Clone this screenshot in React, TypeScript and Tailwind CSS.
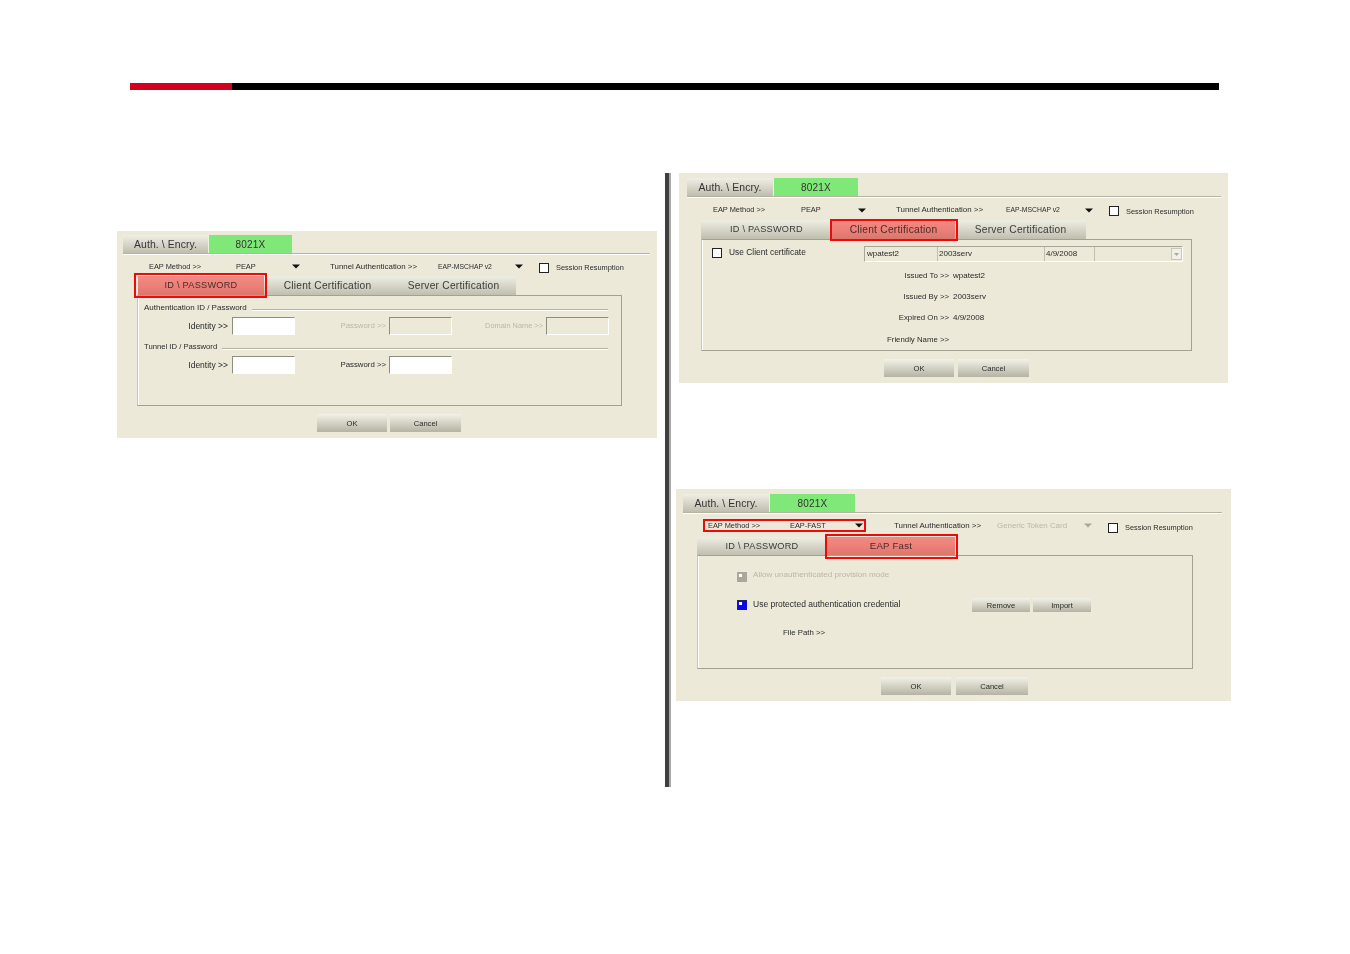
import React from 'react';

const Arrow = ({ disabled }: { disabled?: boolean }) => (
  <svg width="8" height="5" viewBox="0 0 8 5" className="block shrink-0">
    <path d="M0 0.5H8L4 4.5Z" fill={disabled ? '#a9a79a' : '#111111'} />
  </svg>
);

const Check = () => <div className="w-[10px] h-[10px] shrink-0 bg-white border border-[#222222]" />;

const Small = ({ className = '', children }: { className?: string; children: React.ReactNode }) => (
  <span className={`shrink-0 block whitespace-nowrap leading-[10px] ${className.includes('text-[') ? '' : 'text-[7.4px]'} ${className.includes('text-[#') ? '' : 'text-[#2a2a2a]'} ${className}`}>{children}</span>
);

const Input = ({ disabled }: { disabled?: boolean }) => (
  <div
    className={`w-[63px] h-[18px] shrink-0 border-t border-l border-t-[#8f8d7e] border-l-[#8f8d7e] border-r border-b border-r-white border-b-white ${
      disabled ? 'bg-[#ece9d8]' : 'bg-white'
    }`}
  />
);

const Tabs = ({ w1, w2 }: { w1: string; w2: string }) => (
  <div className="flex h-[18px]">
    <div className={`${w1} flex items-center justify-center pt-[2px] bg-gradient-to-b from-[#f0efe5] to-[#bfbdae] text-[10.4px] tracking-[0.1px] text-[#333333] whitespace-nowrap`}>
      Auth. \ Encry.
    </div>
    <div className={`${w2} flex items-center justify-center pt-[1px] bg-[#80e878] border-l border-l-[#e8f5d8] text-[10px] tracking-[0.2px] text-[#333333]`}>
      8021X
    </div>
  </div>
);

const Rule = ({ className = '' }: { className?: string }) => (
  <div className={`h-[2px] border-t border-t-[#b5b3a4] border-b border-b-white ${className}`} />
);

const SubTab = ({ className = '', children }: { className?: string; children: React.ReactNode }) => (
  <div className={`h-full flex items-center justify-center pt-[1px] bg-gradient-to-b from-[#efeee3] to-[#c0beaf] tracking-[0.25px] text-[#3a3a3a] whitespace-nowrap ${className.includes('text-[') ? '' : 'text-[10.2px]'} ${className}`}>
    {children}
  </div>
);

const RedTab = ({ className = '', children }: { className?: string; children: React.ReactNode }) => (
  <div className={`h-full flex items-center justify-center pt-[1px] bg-gradient-to-b from-[#ef8b83] via-[#ee8078] to-[#d9776e] tracking-[0.25px] text-[#4a2a28] whitespace-nowrap ${className.includes('text-[') ? '' : 'text-[10.2px]'} ${className}`}>
    {children}
  </div>
);

const Btn = ({ className = '', children }: { className?: string; children: React.ReactNode }) => (
  <div className={`h-[18px] shrink-0 flex items-center justify-center pt-[1px] bg-gradient-to-b from-[#f3f2e8] to-[#b5b3a3] text-[7.6px] text-[#2a2a2a] ${className}`}>
    {children}
  </div>
);

const Legend = ({ size, children }: { size: string; children: React.ReactNode }) => (
  <div className="flex items-center h-[14px] ml-[6px] mr-[13px] gap-[5px]">
    <Small className={size}>{children}</Small>
    <div className="flex-1 mt-[3px] h-[2px] border-t border-t-[#b5b3a4] border-b border-b-white" />
  </div>
);

const FirstPanel = () => (
  <div className="w-[540px] h-[207px] pt-[4px] bg-[#ece9d8] blur-[0.3px]">
    <div className="ml-[6px]"><Tabs w1="w-[85px]" w2="w-[84px]" /></div>
    <Rule className="ml-[6px] w-[527px]" />
    <div className="flex items-center h-[21px] pt-[2px] ml-[32px]">
      <Small className="w-[87px]">EAP Method &gt;&gt;</Small>
      <Small className="w-[56px]">PEAP</Small>
      <div className="w-[38px]"><Arrow /></div>
      <Small className="w-[108px] text-[7.9px]">Tunnel Authentication &gt;&gt;</Small>
      <Small className="w-[77px] text-[6.8px]">EAP-MSCHAP v2</Small>
      <div className="w-[24px]"><Arrow /></div>
      <div className="w-[17px] mt-[2px]"><Check /></div>
      <Small className="mt-[3px]">Session Resumption</Small>
    </div>
    <div className="flex h-[19px] ml-[21px]">
      <div className="relative w-[126px] h-full">
        <RedTab className="text-[9.2px]">ID \ PASSWORD</RedTab>
        <div className="absolute -left-[4px] -right-[3px] -top-[3px] -bottom-[3px] border-2 border-[#ee0a0a]" />
      </div>
      <SubTab className="w-[127px]">Client Certification</SubTab>
      <SubTab className="w-[125px]">Server Certification</SubTab>
    </div>
    <div className="ml-[20px] w-[485px] h-[111px] pt-[5px] border border-[#a3a193] border-l-[#c9c7b8] shadow-[inset_1px_0_0_#ffffff]">
      <Legend size="text-[8px]">Authentication ID / Password</Legend>
      <div className="flex items-center h-[18px] mt-[2px]">
        <Small className="w-[90px] text-right mr-[4px] text-[8.5px]">Identity &gt;&gt;</Small>
        <Input />
        <Small className="w-[91px] text-right mr-[3px] text-[7.8px] text-[#b9b7aa]">Password &gt;&gt;</Small>
        <Input disabled />
        <Small className="w-[91px] text-right mr-[3px] text-[7.4px] text-[#b9b7aa]">Domain Name &gt;&gt;</Small>
        <Input disabled />
      </div>
      <div className="mt-[5px]"><Legend size="text-[7.7px]">Tunnel ID / Password</Legend></div>
      <div className="flex items-center h-[18px] mt-[2px]">
        <Small className="w-[90px] text-right mr-[4px] text-[8.5px]">Identity &gt;&gt;</Small>
        <Input />
        <Small className="w-[91px] text-right mr-[3px] text-[7.8px]">Password &gt;&gt;</Small>
        <Input />
      </div>
    </div>
    <div className="flex mt-[8px] ml-[200px] gap-[3px]">
      <Btn className="w-[70px]">OK</Btn>
      <Btn className="w-[71px]">Cancel</Btn>
    </div>
  </div>
);

const InfoRow = ({ label, value }: { label: string; value?: string }) => (
  <div className="flex items-center h-[21.3px]">
    <Small className="w-[247px] text-right text-[7.8px]">{label}</Small>
    {value && <Small className="ml-[4px] text-[8px]">{value}</Small>}
  </div>
);

const SecondPanel = () => (
  <div className="ml-[3px] w-[549px] h-[210px] pt-[5px] bg-[#ece9d8] blur-[0.3px]">
    <div className="ml-[8px]"><Tabs w1="w-[86px]" w2="w-[85px]" /></div>
    <Rule className="ml-[8px] w-[534px]" />
    <div className="flex items-center h-[22px] pt-[2px] ml-[34px]">
      <Small className="w-[88px]">EAP Method &gt;&gt;</Small>
      <Small className="w-[57px]">PEAP</Small>
      <div className="w-[38px]"><Arrow /></div>
      <Small className="w-[110px] text-[7.9px]">Tunnel Authentication &gt;&gt;</Small>
      <Small className="w-[79px] text-[6.8px]">EAP-MSCHAP v2</Small>
      <div className="w-[24px]"><Arrow /></div>
      <div className="w-[17px] mt-[2px]"><Check /></div>
      <Small className="mt-[3px]">Session Resumption</Small>
    </div>
    <div className="flex h-[19px] ml-[22px]">
      <SubTab className="w-[131px] text-[9.2px]">ID \ PASSWORD</SubTab>
      <div className="relative w-[123px] h-full">
        <RedTab>Client Certification</RedTab>
        <div className="absolute -left-[2px] -right-[3px] -top-[1px] -bottom-[2px] border-2 border-[#ee0a0a]" />
      </div>
      <SubTab className="w-[131px]">Server Certification</SubTab>
    </div>
    <div className="ml-[22px] w-[491px] h-[112px] pt-[6px] border border-[#a3a193] border-l-[#c9c7b8] shadow-[inset_1px_0_0_#ffffff]">
      <div className="flex h-[17px] ml-[10px]">
        <div className="w-[17px] mt-[2px]"><Check /></div>
        <Small className="w-[135px] text-[8.4px] mt-[1px]">Use Client certificate</Small>
        <div className="w-[319px] h-[16px] flex items-center border-t border-l border-[#a8a698] border-r-white border-b-white border-r border-b">
          <Small className="w-[73px] pl-[2px] border-r border-r-[#c0beaf] leading-[14px] text-[8px]">wpatest2</Small>
          <Small className="w-[107px] pl-[1px] border-r border-r-[#c0beaf] leading-[14px] text-[8px]">2003serv</Small>
          <Small className="w-[50px] pl-[1px] border-r border-r-[#c0beaf] leading-[14px] text-[8px]">4/9/2008</Small>
          <div className="ml-[76px] w-[11px] h-[12px] flex items-center justify-center bg-[#f2f0e6] border border-[#c9c7b8]">
            <svg width="5" height="3" viewBox="0 0 5 3" className="block"><path d="M0 0H5L2.5 3Z" fill="#a9a79a" /></svg>
          </div>
        </div>
      </div>
      <div className="mt-[2px]">
        <InfoRow label="Issued To >>" value="wpatest2" />
        <InfoRow label="Issued By >>" value="2003serv" />
        <InfoRow label="Expired On >>" value="4/9/2008" />
        <InfoRow label="Friendly Name >>" />
      </div>
    </div>
    <div className="flex mt-[8px] ml-[205px] gap-[4px]">
      <Btn className="w-[70px]">OK</Btn>
      <Btn className="w-[71px]">Cancel</Btn>
    </div>
  </div>
);

const ThirdPanel = () => (
  <div className="mt-[106px] w-[555px] h-[212px] pt-[5px] bg-[#ece9d8] blur-[0.3px]">
    <div className="ml-[7px]"><Tabs w1="w-[86px]" w2="w-[86px]" /></div>
    <Rule className="ml-[7px] w-[539px]" />
    <div className="flex items-center h-[23px] ml-[27px]">
      <div className="flex items-center w-[163px] h-[13px] pl-[3px] border-2 border-[#ee0a0a]">
        <Small className="w-[82px]">EAP Method &gt;&gt;</Small>
        <Small className="w-[65px]">EAP-FAST</Small>
        <Arrow />
      </div>
      <Small className="ml-[28px] w-[103px] text-[7.9px]">Tunnel Authentication &gt;&gt;</Small>
      <Small className="w-[87px] text-[7.9px] text-[#b9b7aa]">Generic Token Card</Small>
      <div className="w-[24px]"><Arrow disabled /></div>
      <div className="w-[17px] mt-[4px]"><Check /></div>
      <Small className="mt-[4px]">Session Resumption</Small>
    </div>
    <div className="flex h-[18px] ml-[21px]">
      <SubTab className="w-[130px] text-[9.2px]">ID \ PASSWORD</SubTab>
      <div className="relative w-[128px] h-full">
        <RedTab className="text-[9.6px]">EAP Fast</RedTab>
        <div className="absolute -left-[2px] -right-[3px] -top-[3px] -bottom-[4px] border-2 border-[#ee0a0a]" />
      </div>
    </div>
    <div className="ml-[21px] w-[496px] h-[114px] pt-[14px] pl-[39px] border border-[#a3a193] border-l-[#c9c7b8] shadow-[inset_1px_0_0_#ffffff]">
      <div className="flex items-center h-[14px] gap-[6px]">
        <div className="w-[10px] h-[10px] bg-[#aaa89a] relative">
          <div className="absolute left-[2px] top-[2px] w-[3px] h-[3px] bg-white" />
        </div>
        <Small className="mb-[4px] text-[8.1px] text-[#b9b7aa]">Allow unauthenticated provision mode</Small>
      </div>
      <div className="flex items-center h-[14px] mt-[14px]">
        <div className="w-[10px] h-[10px] bg-[#0808e8] border-t border-l border-[#222266] relative">
          <div className="absolute left-[1px] top-[1px] w-[3px] h-[3px] bg-white" />
        </div>
        <Small className="ml-[6px] w-[219px] mb-[2px] text-[8.5px]">Use protected authentication credential</Small>
        <Btn className="w-[58px] !h-[14px]">Remove</Btn>
        <Btn className="ml-[3px] w-[58px] !h-[14px]">Import</Btn>
      </div>
      <div className="flex items-center h-[14px] pt-[2px] mt-[13px] ml-[46px]">
        <Small className="text-[7.8px]">File Path &gt;&gt;</Small>
      </div>
    </div>
    <div className="flex mt-[8px] ml-[205px] gap-[5px]">
      <Btn className="w-[70px]">OK</Btn>
      <Btn className="w-[72px]">Cancel</Btn>
    </div>
  </div>
);

export default function App() {
  return (
    <div className="w-[1350px] h-[954px] bg-white overflow-hidden pt-[83px] font-['Liberation_Sans',Arial,sans-serif]">
      {/* top bar */}
      <div className="flex h-[7px] ml-[130px] w-[1089px]">
        <div className="w-[102px] bg-[#d0021f]" />
        <div className="flex-1 bg-black" />
      </div>

      <div className="flex mt-[83px]">
        <div className="ml-[117px] mt-[58px]">
          <FirstPanel />
        </div>

        {/* divider */}
        <div className="ml-[8px] w-[6px] h-[614px] bg-[#3f3f3f] border-r-2 border-r-[#a8a8a8]" />

        <div className="ml-[5px]">
          <SecondPanel />
          <ThirdPanel />
        </div>
      </div>
    </div>
  );
}
